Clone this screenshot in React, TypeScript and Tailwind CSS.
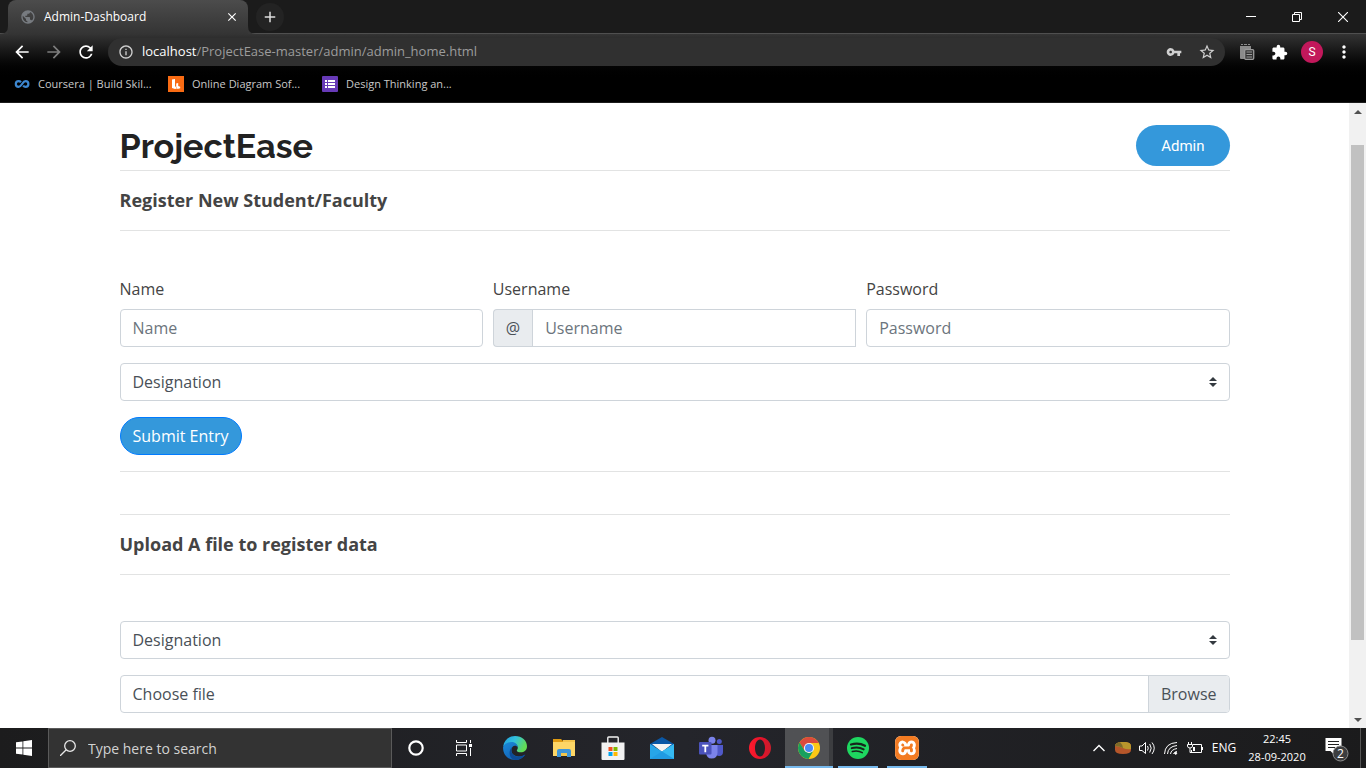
import React from "react";
import {
  MdArrowBack,
  MdArrowForward,
  MdRefresh,
  MdInfoOutline,
  MdVpnKey,
  MdStarBorder,
  MdExtension,
  MdMoreVert,
  MdClose,
  MdAdd,
  MdPublic,
} from "react-icons/md";
import { SiXampp } from "react-icons/si";

type IconProps = { className?: string };

function CourseraIcon() {
  return (
    <svg viewBox="0 0 16 16" className="size-4">
      <path
        d="M7 6.300C6.400 5.600 5.700 5.200 4.600 5.200a2.800 2.800 0 0 0 0 5.600c3.400 0 3.600-5.600 7-5.600a2.800 2.800 0 0 1 0 5.600c-1.100 0-1.900-.5-2.500-1.200"
        fill="none"
        stroke="#3d87d0"
        strokeWidth="2.200"
      />
    </svg>
  );
}

function LucidIcon() {
  return (
    <svg viewBox="0 0 16 16" className="size-4">
      <rect width="16" height="16" fill="#f96b13" />
      <path d="M4 3.500L7 3v7l2 2.500L7 13l-3-1z" fill="#fff" />
      <path d="M8.200 7.500l2-.5v3l2 .8v1.400L9.500 13l-1.300-2z" fill="#fff" />
    </svg>
  );
}

function FormsIcon() {
  return (
    <svg viewBox="0 0 16 16" className="size-4">
      <rect width="16" height="16" rx="1" fill="#673ab7" />
      <path d="M3 4h2v2H3zM6 4h7v2H6zM3 7h2v2H3zM6 7h7v2H6zM3 10h2v2H3zM6 10h7v2H6z" fill="#fff" />
    </svg>
  );
}

function ClipboardIcon({ className }: IconProps) {
  return (
    <svg viewBox="0 0 16 18" className={className}>
      <path d="M1 3h11v4H6v9H2q-1 0-1-1z" fill="#8b8b8b" />
      <path d="M2 1.500h2M5 1.500h3M9 1.500h2" stroke="#8b8b8b" />
      <rect x="5.700" y="6.700" width="9" height="9.600" rx="1" fill="#333" stroke="#9a9a9a" strokeWidth="1.300" />
      <path d="M7.500 9h5.500M7.500 11.500h5.500M7.500 14h5.500" stroke="#9a9a9a" strokeWidth="1.200" />
    </svg>
  );
}

const bookmarks = [
  { label: "Coursera | Build Skil...", icon: <CourseraIcon /> },
  { label: "Online Diagram Sof...", icon: <LucidIcon /> },
  { label: "Design Thinking an...", icon: <FormsIcon /> },
];

function TabStrip() {
  return (
    <div className="flex h-[34px] bg-[#1b1b1b]">
      <div className="relative w-2 border-b border-[#4f4f4f]">
        <svg viewBox="0 0 8 8" className="absolute right-0 -bottom-px size-2">
          <path d="M8 0v8H0q8 0 8-8z" fill="#373737" />
        </svg>
      </div>
      <div className="flex w-60 items-center gap-2 rounded-t-lg bg-linear-to-b from-[#4c4c4c] to-[#343434] pr-2 pl-3">
        <MdPublic className="size-4 text-[#777b80]" />
        <span className="flex-1 text-[12px] text-white">Admin-Dashboard</span>
        <button aria-label="Close tab" className="grid size-4 place-items-center text-white">
          <MdClose className="size-[14px]" />
        </button>
      </div>
      <div className="relative flex flex-1 items-center justify-between border-b border-[#4f4f4f] pl-2">
        <svg viewBox="0 0 8 8" className="absolute -bottom-px left-0 size-2">
          <path d="M0 0v8h8q-8 0-8-8z" fill="#373737" />
        </svg>
        <button aria-label="New tab" className="grid size-7 place-items-center rounded-full bg-[#232323] text-[#ddd]">
          <MdAdd className="size-[18px]" />
        </button>
        <div className="flex h-7 items-center text-white">
          <button aria-label="Minimize" className="grid w-[46px] place-items-center">
            <svg viewBox="0 0 10 10" className="size-[10px]">
              <path d="M0 4.500h10" stroke="currentColor" />
            </svg>
          </button>
          <button aria-label="Restore" className="grid w-[46px] place-items-center">
            <svg viewBox="0 0 10 10" className="size-[10px]">
              <path d="M.5 2.500h7v7h-7zM2.500 2.500v-2h7v7h-2" fill="none" stroke="currentColor" />
            </svg>
          </button>
          <button aria-label="Close window" className="grid w-[46px] place-items-center">
            <svg viewBox="0 0 10 10" className="size-[10px]">
              <path d="M0 0l10 10M10 0L0 10" stroke="currentColor" strokeWidth="1.100" />
            </svg>
          </button>
        </div>
      </div>
    </div>
  );
}

function BrowserChrome() {
  return (
    <header className="shrink-0 text-white">
      <TabStrip />
      <div className="h-[69px] border-b border-[#1c1c1c] bg-linear-to-b from-[#343434] to-black to-70%">
        <div className="flex h-9 items-center px-3">
          <div className="flex w-24 items-center gap-3">
            <button aria-label="Back">
              <MdArrowBack className="size-5" />
            </button>
            <button aria-label="Forward" className="text-[#7d7d7d]">
              <MdArrowForward className="size-5" />
            </button>
            <button aria-label="Reload">
              <MdRefresh className="size-5" />
            </button>
          </div>
          <div className="flex h-7 flex-1 items-center gap-2 rounded-full bg-[#303030] pr-[9px] pl-[10px] text-[#d0d0d0]">
            <MdInfoOutline className="size-4" />
            <span className="flex-1 text-[13px] text-[#9c9c9c]">
              <span className="text-white">localhost</span>/ProjectEase-master/admin/admin_home.html
            </span>
            <button aria-label="Saved passwords" className="mr-2">
              <MdVpnKey className="size-4" />
            </button>
            <button aria-label="Bookmark this page">
              <MdStarBorder className="size-[18px]" />
            </button>
          </div>
          <div className="flex items-center pl-3">
            <button aria-label="Clipboard extension" className="grid w-5 place-items-center">
              <ClipboardIcon className="h-[18px] w-4" />
            </button>
            <button aria-label="Extensions" className="grid w-11 place-items-center">
              <MdExtension className="size-[17px]" />
            </button>
            <button
              aria-label="Profile"
              className="grid size-[22px] place-items-center rounded-full bg-[#c2185b] font-['Roboto',sans-serif] text-[12px]"
            >
              S
            </button>
            <button aria-label="Menu" className="ml-[11px] grid w-5 place-items-center">
              <MdMoreVert className="size-5" />
            </button>
          </div>
        </div>
        <nav className="flex h-7 items-center pl-[14px] text-[11px] text-[#c8c8c8]">
          {bookmarks.map((b) => (
            <a key={b.label} href="#" className="flex w-[154px] items-center gap-2 whitespace-nowrap">
              {b.icon}
              {b.label}
            </a>
          ))}
        </nav>
      </div>
    </header>
  );
}

const fieldClass =
  "h-[38px] w-full min-w-0 rounded border border-[#ced4da] bg-white px-3 text-[16px] text-[#495057] placeholder:text-[#6c757d]";

function DesignationSelect({ id }: { id: string }) {
  return (
    <div className="relative">
      <select id={id} aria-label="Designation" className={fieldClass + " appearance-none"}>
        <option>Designation</option>
        <option>Student</option>
        <option>Faculty</option>
      </select>
      <svg viewBox="0 0 4 5" className="pointer-events-none absolute top-[14px] right-[13px] h-[10px] w-2">
        <path fill="#343a40" d="M2 0L0 2h4zm0 5L0 3h4z" />
      </svg>
    </div>
  );
}

function SectionTitle({ children }: { children: React.ReactNode }) {
  return (
    <h2 className="flex h-[60px] items-center border-b border-[#e2e3e3] pb-[2px] text-[18px] font-bold text-[#444]">
      {children}
    </h2>
  );
}

function DashboardPage() {
  return (
    <main className="mx-auto w-full max-w-[1110px] text-[16px] leading-6 text-[#444]">
      <div className="flex h-[68px] items-center justify-between border-b border-[#e2e3e3] pt-[18px]">
        <h1 className="font-['Raleway','Lato',sans-serif] text-[34px] leading-[44px] font-bold text-[#222]">
          ProjectEase
        </h1>
        <button className="h-[41px] rounded-full bg-[#3498db] px-[25px] font-['Roboto',sans-serif] text-[15px] text-white">
          Admin
        </button>
      </div>
      <SectionTitle>Register New Student/Faculty</SectionTitle>
      <form className="flex flex-col items-start gap-4 border-b border-[#e2e3e3] pt-[46px] pb-4">
        <div className="grid w-full grid-cols-3 gap-[10px]">
          <div className="flex flex-col gap-2">
            <label htmlFor="name">Name</label>
            <input id="name" type="text" placeholder="Name" className={fieldClass} />
          </div>
          <div className="flex flex-col gap-2">
            <label htmlFor="username">Username</label>
            <div className="flex">
              <span className="flex h-[38px] items-center rounded-l border border-r-0 border-[#ced4da] bg-[#e9ecef] px-3 text-[#495057]">
                @
              </span>
              <input id="username" type="text" placeholder="Username" className={fieldClass + " rounded-none"} />
            </div>
          </div>
          <div className="flex flex-col gap-2">
            <label htmlFor="password">Password</label>
            <input id="password" type="password" placeholder="Password" className={fieldClass} />
          </div>
        </div>
        <div className="w-full">
          <DesignationSelect id="designation" />
        </div>
        <button type="button" className="h-[38px] rounded-full border border-[#007bff] bg-[#3498db] px-3 text-white">
          Submit Entry
        </button>
      </form>
      <div className="h-[43px] border-b border-[#e2e3e3]" />
      <SectionTitle>Upload A file to register data</SectionTitle>
      <form className="flex flex-col gap-4 pt-[46px]">
        <DesignationSelect id="upload-designation" />
        <label className="relative flex h-[38px] items-stretch overflow-hidden rounded border border-[#ced4da] text-[#495057]">
          <input type="file" className="sr-only" />
          <span className="flex flex-1 items-center px-3">Choose file</span>
          <span className="flex items-center border-l border-[#ced4da] bg-[#e9ecef] px-3">Browse</span>
        </label>
      </form>
    </main>
  );
}

function ScrollBar() {
  return (
    <div className="flex w-[17px] shrink-0 flex-col items-center bg-[#f1f1f1]">
      <button aria-label="Scroll up" className="grid h-[17px] w-full place-items-center">
        <svg viewBox="0 0 8 4" className="h-1 w-2">
          <path d="M4 0l4 4H0z" fill="#505050" />
        </svg>
      </button>
      <div className="flex w-[13px] flex-1 flex-col pt-[25px] pb-[71px]">
        <div className="flex-1 bg-[#c1c1c1]" />
      </div>
      <button aria-label="Scroll down" className="grid h-[17px] w-full place-items-center">
        <svg viewBox="0 0 8 4" className="h-1 w-2">
          <path d="M4 4l4-4H0z" fill="#505050" />
        </svg>
      </button>
    </div>
  );
}

function EdgeIcon() {
  return (
    <svg viewBox="0 0 24 24" className="size-6">
      <defs>
        <linearGradient id="edgeTop" x1="0" y1="0" x2="1" y2="0.400">
          <stop offset="0" stopColor="#1f9de0" />
          <stop offset="0.500" stopColor="#33c1dd" />
          <stop offset="1" stopColor="#62dc55" />
        </linearGradient>
        <linearGradient id="edgeLow" x1="0" y1="0" x2="0.600" y2="1">
          <stop offset="0" stopColor="#1b8ad8" />
          <stop offset="1" stopColor="#1160b4" />
        </linearGradient>
      </defs>
      <path
        d="M.2 10.500C1 4.200 6 0 12 0c7 0 12 4.800 12 10.300 0 4-3 6-6.200 6-2.700 0-4-1-4-1.900 0-.6 1-1 1-2.700 0-2.300-2.200-4.400-5.800-4.400-4 0-7.300 2-8.800 3.200z"
        fill="url(#edgeTop)"
      />
      <path
        d="M.1 11C1 8.500 4.500 6 8.500 6c4 0 6.300 2.600 6.300 5.500-.6-1.100-1.600-1.700-2.800-1.700-2 0-3.600 1.900-3.600 4.500 0 4 3.600 6.200 7.400 6.200 2.500 0 4.700-.8 6.500-2-2 3.500-5.800 5.500-10 5.500C5 24-.4 18.500.1 11z"
        fill="url(#edgeLow)"
      />
      <path
        d="M8.400 13c-.8 5 3.400 7.700 7.400 7.500 2.500 0 4.700-.8 6.500-2-2 3.500-5.800 5.500-10 5.500C6.800 23.500 4.500 16 8.900 11z"
        fill="#0d4b96"
      />
    </svg>
  );
}

function ExplorerIcon() {
  return (
    <svg viewBox="0 0 22 20" className="h-5 w-[22px]">
      <path d="M0 1h8l2 2h12v4H0z" fill="#e09b12" />
      <path d="M10 2h12v3H10z" fill="#f3c34b" />
      <path d="M0 4h22v14H0z" fill="#fdd666" />
      <path d="M4 19v-6q0-2 2-2h10q2 0 2 2v6h-4v-4H8v4z" fill="#3e96d8" />
      <path d="M8 15h6v3H8z" fill="#f2c64c" />
    </svg>
  );
}

function StoreIcon() {
  return (
    <svg viewBox="0 0 24 24" className="size-6">
      <path d="M6.800 7V1.800q0-.8.8-.8h8.800q.8 0 .8.800V7" fill="none" stroke="#f2f2f2" strokeWidth="1.400" />
      <path d="M.5 6.500h23V23q0 1-1 1h-21q-1 0-1-1z" fill="#f2f2f2" />
      <path d="M7.500 11h4v4h-4z" fill="#f25022" />
      <path d="M12.500 11h4v4h-4z" fill="#7fba00" />
      <path d="M7.500 16h4v4h-4z" fill="#00a4ef" />
      <path d="M12.500 16h4v4h-4z" fill="#ffb900" />
    </svg>
  );
}

function MailIcon() {
  return (
    <svg viewBox="0 0 24 22" className="h-[22px] w-6">
      <path d="M0 7l12-7 12 7v3H0z" fill="#0a57a5" />
      <path d="M2 7h20L12 15z" fill="#f4f4f4" />
      <path d="M0 7l12 7.500L24 7v15H0z" fill="#27a5e8" />
      <path d="M24 7v15L10 13.200l2 1.300z" fill="#36baf2" />
      <path d="M0 22l12-7.500L24 22z" fill="#1e94df" opacity=".6" />
    </svg>
  );
}

function TeamsIcon() {
  return (
    <svg viewBox="0 0 24 24" className="size-6">
      <circle cx="13" cy="4.200" r="3.500" fill="#7b83eb" />
      <circle cx="20.300" cy="5.500" r="2.500" fill="#5059c9" />
      <path d="M16 9h8v7q0 4-4 4-3 0-4-3z" fill="#5059c9" />
      <path d="M7 9h11.500v7.500q0 6-6 6-5 0-5.500-6z" fill="#7b83eb" />
      <rect y="6" width="12.500" height="12.500" rx="1" fill="#4b53bc" />
      <path d="M3.200 8.800h6.200v1.600H7.200v5.800H5.400v-5.800H3.200z" fill="#fff" />
    </svg>
  );
}

function OperaIcon() {
  return (
    <svg viewBox="0 0 22 22" className="size-[22px]">
      <defs>
        <linearGradient id="operaRed" x1="0" y1="0" x2="1" y2="0">
          <stop offset="0" stopColor="#ff1b2d" />
          <stop offset="0.600" stopColor="#e3122a" />
          <stop offset="1" stopColor="#c81e2c" />
        </linearGradient>
      </defs>
      <path
        fillRule="evenodd"
        d="M11 0a11 11 0 1 1 0 22 11 11 0 0 1 0-22zm0 2.500C8 2.500 6 6.500 6 11s2 8.500 5 8.500 5-4 5-8.500-2-8.500-5-8.500z"
        fill="url(#operaRed)"
      />
    </svg>
  );
}

function ChromeIcon() {
  return (
    <svg viewBox="0 0 22 22" className="size-[22px]">
      <circle cx="11" cy="11" r="11" fill="#fbc816" />
      <path d="M1.500 5.500A11 11 0 0 1 20.500 5.500L20.900 6H11L6.500 13.500z" fill="#db4a3c" />
      <path d="M1.500 5.500A11 11 0 0 0 10.500 22l5-8.500-4.500 2.600-4.500-2.600z" fill="#17a05e" />
      <circle cx="11" cy="11" r="5.100" fill="#f4f4f4" />
      <circle cx="11" cy="11" r="4" fill="#4a8af4" />
    </svg>
  );
}

function SpotifyIcon() {
  return (
    <svg viewBox="0 0 22 22" className="size-[22px]">
      <circle cx="11" cy="11" r="11" fill="#1ed760" />
      <path d="M4 7.500c5-1.500 10-1 14 1.300" fill="none" stroke="#17251c" strokeWidth="2.200" strokeLinecap="round" />
      <path d="M4.700 11.200c4.300-1.200 8.400-.8 12 1.200" fill="none" stroke="#17251c" strokeWidth="1.900" strokeLinecap="round" />
      <path d="M5.300 14.600c3.600-.9 7-.6 10 1.100" fill="none" stroke="#17251c" strokeWidth="1.500" strokeLinecap="round" />
    </svg>
  );
}

function XamppIcon() {
  return (
    <span className="flex size-6 items-center justify-center overflow-hidden rounded-md bg-white text-[#f37b22]">
      <SiXampp className="size-6 shrink-0" />
    </span>
  );
}

const pinned = [
  { name: "Edge", icon: <EdgeIcon />, state: "" },
  { name: "File Explorer", icon: <ExplorerIcon />, state: "" },
  { name: "Microsoft Store", icon: <StoreIcon />, state: "" },
  { name: "Mail", icon: <MailIcon />, state: "" },
  { name: "Teams", icon: <TeamsIcon />, state: "" },
  { name: "Opera", icon: <OperaIcon />, state: "" },
  { name: "Chrome", icon: <ChromeIcon />, state: "active" },
  { name: "Spotify", icon: <SpotifyIcon />, state: "open" },
  { name: "XAMPP", icon: <XamppIcon />, state: "open" },
];

function TaskBar() {
  return (
    <footer className="flex h-10 shrink-0 items-stretch justify-between bg-linear-to-r from-[#1c1c1d] via-[#24252b] to-[#1b1b1c] text-white">
      <div className="flex items-stretch">
        <button aria-label="Start" className="grid w-12 place-items-center">
          <svg viewBox="0 0 16 16" className="size-4">
            <path
              d="M0 2.300L6.500 1.400v6.200H0zM7.300 1.300L16 0v7.600H7.300zM0 8.400h6.500v6.200L0 13.700zM7.300 8.400H16V16l-8.700-1.300z"
              fill="#fff"
            />
          </svg>
        </button>
        <label className="flex w-[344px] items-center gap-3 border border-[#5a5a5a] bg-[#333] pl-[11px]">
          <svg viewBox="0 0 16 16" className="size-4">
            <circle cx="10" cy="6" r="5.300" fill="none" stroke="#e8e8e8" strokeWidth="1.300" />
            <path d="M6.200 9.800L0 16" stroke="#e8e8e8" strokeWidth="1.300" />
          </svg>
          <input
            type="text"
            aria-label="Search"
            placeholder="Type here to search"
            className="min-w-0 flex-1 bg-transparent text-[14px] placeholder:text-[#d2d2d2]"
          />
        </label>
        <button aria-label="Cortana" className="grid w-12 place-items-center">
          <svg viewBox="0 0 16 16" className="size-4">
            <circle cx="8" cy="8" r="6.700" fill="none" stroke="#fff" strokeWidth="2.200" />
          </svg>
        </button>
        <button aria-label="Task View" className="mr-[2px] grid w-12 place-items-center">
          <svg viewBox="0 0 16 16" className="size-4">
            <path
              d="M.5 0v2.500h10V0M.5 16v-2.500h10V16M.5 5h10v6H.5zM14.500 0v3M14.500 8v8"
              fill="none"
              stroke="#fff"
            />
            <path d="M13 4h3v3h-3z" fill="#fff" />
          </svg>
        </button>
        {pinned.map((app) => (
          <button
            key={app.name}
            aria-label={app.name}
            className={
              app.state === "active"
                ? "ml-px flex w-12 flex-col items-center bg-linear-to-r from-[#505154] from-92% to-[#3c3d40] to-92%"
                : "flex w-[49px] flex-col items-center"
            }
          >
            <span className="grid flex-1 place-items-center pt-[2px]">{app.icon}</span>
            <span
              className={
                app.state === "active"
                  ? "h-[2px] w-full bg-[#76b9ed]"
                  : app.state === "open"
                    ? "h-[2px] w-10 bg-[#76b9ed]"
                    : "h-[2px] w-10"
              }
            />
          </button>
        ))}
      </div>
      <div className="flex items-stretch">
        <button aria-label="Show hidden icons" className="grid w-6 place-items-center">
          <svg viewBox="0 0 12 8" className="h-2 w-3">
            <path d="M.5 7L6 1.500 11.500 7" fill="none" stroke="#fff" strokeWidth="1.400" />
          </svg>
        </button>
        <span className="grid w-6 place-items-center">
          <svg viewBox="0 0 16 12" className="h-3 w-4">
            <path d="M0 4q0-4 8-4t8 4v4q0 4-8 4t-8-4z" fill="#b5562a" />
            <path d="M5 0q11-1 11 4v3q-4 1-8-1-5-2-8-2 0-3 5-4z" fill="#b8952c" />
            <path d="M5 0q3 3 3 6-4-2-8-2 0-3 5-4z" fill="#7d6a2a" />
          </svg>
        </span>
        <span className="grid w-6 place-items-center">
          <svg viewBox="0 0 16 14" className="h-[14px] w-4" fill="none" stroke="#fff">
            <path d="M.5 5v4.500H3L6.500 12.500v-11L3 5zM8.500 5q1.500 2 0 4.500M10.700 3q3 4 0 8.500M13 1.500q4.500 5.500 0 11.500" />
          </svg>
        </span>
        <span className="grid w-6 place-items-center">
          <svg viewBox="0 0 14 14" className="size-[14px]" fill="none" stroke="#fff">
            <path d="M.5 13Q1 2 13 1.500M3.500 13Q4 5.500 13 4.500M6.500 13Q7 8.500 13 7.500M9.500 13q.5-2 3.500-2.500" />
            <circle cx="11.700" cy="12.300" r="1" fill="#fff" />
          </svg>
        </span>
        <span className="grid w-6 place-items-center">
          <svg viewBox="0 0 16 12" className="h-3 w-4" fill="none" stroke="#fff">
            <path d="M6 2.500h8.500v8h-10V8M15.500 5v3M1.500 0v2M4.500 0v2M.5 2.500h5V4q0 2-2.500 2T.5 4zM3 6v4.500h2" />
            <path d="M6 5h2v4H6z" fill="#fff" stroke="none" />
          </svg>
        </span>
        <span className="grid w-[34px] place-items-center text-[12px]">ENG</span>
        <button className="w-[72px] text-center text-[11px] leading-[18px] whitespace-nowrap">
          22:45
          <br />
          28-09-2020
        </button>
        <button aria-label="Notifications" className="grid w-12 place-items-center border-r border-[#555] pt-1">
          <svg viewBox="0 0 24 24" className="size-6">
            <path d="M.5 0h16v13H9v3.500L5.500 13H.5z" fill="#fff" />
            <path d="M3 3.500h11M3 6.500h11M3 9.500h7" stroke="#222" />
            <circle cx="15.500" cy="15.500" r="7.500" fill="#3c3d3f" stroke="#8c8c8c" />
            <text x="15.500" y="20" textAnchor="middle" fontSize="12" fill="#fff">
              2
            </text>
          </svg>
        </button>
        <span className="w-[5px]" />
      </div>
    </footer>
  );
}

export default function App() {
  return (
    <div className="flex h-screen flex-col overflow-hidden bg-white font-['Open_Sans','Noto_Sans',sans-serif]">
      <BrowserChrome />
      <div className="flex min-h-0 flex-1">
        <div className="min-w-0 flex-1 overflow-hidden">
          <DashboardPage />
        </div>
        <ScrollBar />
      </div>
      <TaskBar />
    </div>
  );
}
